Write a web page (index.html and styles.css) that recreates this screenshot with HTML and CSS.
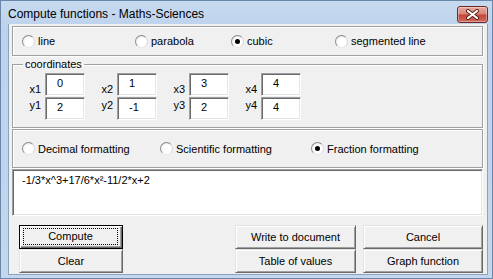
FILE: index.html
```html
<!DOCTYPE html>
<html lang="en">
  <head>
    <meta charset="UTF-8" />
    <title>Compute functions - Maths-Sciences</title>
    <link rel="stylesheet" href="styles.css">
  </head>
  <body>
    <div class="window">
      <div class="titlebar">
        <span class="title">Compute functions - Maths-Sciences</span>
        <button class="close" aria-label="Close">
          <svg width="15" height="11" viewBox="0 0 15 11">
            <path d="M3 2 L12 9 M12 2 L3 9" stroke="#5a1f19" stroke-width="4" stroke-linecap="round" />
            <path d="M3 2 L12 9 M12 2 L3 9" stroke="#ffffff" stroke-width="2.2" stroke-linecap="round" />
          </svg>
        </button>
      </div>

      <div class="client">
        <div class="group curve-type">
          <label class="radio"><span class="dot"></span>line</label>
          <label class="radio"><span class="dot"></span>parabola</label>
          <label class="radio"><span class="dot checked"></span>cubic</label>
          <label class="radio"><span class="dot"></span>segmented line</label>
        </div>

        <fieldset class="coords">
          <legend>coordinates</legend>
          <div class="coord-grid">
            <div class="pair"><span class="lbl lbl-x">x1</span><span class="field">0</span></div>
            <div class="pair"><span class="lbl lbl-x">x2</span><span class="field">1</span></div>
            <div class="pair"><span class="lbl lbl-x">x3</span><span class="field">3</span></div>
            <div class="pair"><span class="lbl lbl-x">x4</span><span class="field">4</span></div>
            <div class="pair"><span class="lbl lbl-y">y1</span><span class="field">2</span></div>
            <div class="pair"><span class="lbl lbl-y">y2</span><span class="field">-1</span></div>
            <div class="pair"><span class="lbl lbl-y">y3</span><span class="field">2</span></div>
            <div class="pair"><span class="lbl lbl-y">y4</span><span class="field">4</span></div>
          </div>
        </fieldset>

        <div class="group formatting">
          <label class="radio"><span class="dot"></span>Decimal formatting</label>
          <label class="radio"><span class="dot"></span>Scientific formatting</label>
          <label class="radio"><span class="dot checked"></span>Fraction formatting</label>
        </div>

        <div class="result">-1/3*x^3+17/6*x²-11/2*x+2</div>

        <div class="buttons">
          <div class="col col-left">
            <button class="btn btn-default"><span class="focus">Compute</span></button>
            <button class="btn">Clear</button>
          </div>
          <div class="col col-mid">
            <button class="btn">Write to document</button>
            <button class="btn">Table of values</button>
          </div>
          <div class="col col-right">
            <button class="btn">Cancel</button>
            <button class="btn">Graph function</button>
          </div>
        </div>
      </div>
    </div>
  </body>
</html>
```

FILE: styles.css
```css
body {
  margin: 0;
  background: #ffffff;
  font-family: 'Liberation Sans', Arial, sans-serif;
  font-size: 11px;
  color: #000000;
}

.window {
  width: 493px;
  height: 279px;
  box-sizing: border-box;
  border: 1px solid #6a86a8;
  background: linear-gradient(#c6d9ef, #bdd3ec 30px, #c3d7ee);
  display: flex;
  flex-direction: column;
  overflow: hidden;
}

.titlebar {
  height: 23px;
  display: flex;
  align-items: center;
  justify-content: space-between;
  padding: 0 4px 0 7px;
  flex-shrink: 0;
}

.title {
  font-size: 12px;
  color: #000000;
  padding-top: 3px;
}

.close {
  width: 31px;
  height: 17px;
  margin-top: 4px;
  padding: 0;
  border: 1px solid #6e2a22;
  border-radius: 3px;
  background: linear-gradient(#e9aa9f, #d88577 45%, #c2473a 55%, #cf6a5c);
  box-shadow: inset 0 0 0 1px rgba(255, 255, 255, 0.35);
  display: flex;
  align-items: center;
  justify-content: center;
}

.client {
  flex: 1;
  margin: 0 4px 3px 7px;
  background: #f0f0f0;
  border: 1px solid #8da3bd;
  border-top: none;
  padding: 2px 4px 0 3px;
}

/* group boxes */
.group,
.coords {
  width: 471px;
  box-sizing: border-box;
  border: 1px solid #a0a0a0;
  box-shadow: inset 1px 1px 0 #ffffff, 1px 1px 0 #ffffff;
}

.group {
  display: grid;
  align-items: center;
  padding-left: 9px;
}

.curve-type {
  height: 30px;
  grid-template-columns: 113px 96px 104px auto;
}

.formatting {
  height: 39px;
  margin-top: 1px;
  grid-template-columns: 138px 151px auto;
}

.radio {
  display: flex;
  align-items: center;
  white-space: nowrap;
}

.dot {
  width: 13px;
  height: 13px;
  box-sizing: border-box;
  border-radius: 50%;
  margin-right: 3px;
  border: 1px solid;
  border-color: #8a8a8a #d8d8d8 #e6e6e6 #8a8a8a;
  background: radial-gradient(circle at 60% 60%, #ffffff 40%, #e4e4e4);
  position: relative;
}

.dot.checked::after {
  content: '';
  position: absolute;
  left: 3px;
  top: 3px;
  width: 5px;
  height: 5px;
  border-radius: 50%;
  background: #000000;
}

/* coordinates */
.coords {
  margin: 2px 0 0;
  padding: 2px 0 7px 10px;
  height: 70px;
}

.coords legend {
  padding: 0 2px;
  line-height: 13px;
}

.coord-grid {
  display: grid;
  grid-template-columns: repeat(4, 72px);
  row-gap: 1px;
  margin-left: 5px;
}

.pair {
  display: flex;
  align-items: center;
}

.lbl {
  width: 13px;
  margin-right: 4px;
  text-align: right;
}

.lbl-x {
  padding-top: 8px;
}

.lbl-y {
  padding-bottom: 8px;
}

.field {
  width: 40px;
  height: 23px;
  box-sizing: border-box;
  background: #ffffff;
  border: 1px solid;
  border-color: #a0a0a0 #ffffff #ffffff #a0a0a0;
  box-shadow: inset 1px 1px 0 #696969, inset -1px -1px 0 #e3e3e3;
  padding: 3px 0 0 11px;
}

/* result box */
.result {
  width: 471px;
  height: 47px;
  box-sizing: border-box;
  margin-top: 1px;
  background: #ffffff;
  border: 1px solid;
  border-color: #a0a0a0 #ffffff #ffffff #a0a0a0;
  box-shadow: inset 1px 1px 0 #696969, inset -1px -1px 0 #e3e3e3;
  padding: 4px 0 0 9px;
}

/* buttons */
.buttons {
  display: flex;
  width: 471px;
  margin-top: 9px;
}

.col {
  display: flex;
  flex-direction: column;
}

.col-left {
  width: 104px;
  margin-left: 7px;
  margin-right: auto;
}

.col-mid {
  width: 121px;
  margin-right: 7px;
}

.col-right {
  width: 120px;
}

.btn {
  height: 24px;
  padding: 0;
  font-family: inherit;
  font-size: 11px;
  color: #000000;
  background: #f0f0f0;
  border: 1px solid;
  border-color: #e3e3e3 #696969 #696969 #e3e3e3;
  box-shadow: inset 1px 1px 0 #ffffff, inset -1px -1px 0 #a0a0a0;
}

.btn-default {
  border-color: #000000;
  box-shadow: inset 1px 1px 0 #ffffff, inset -1px -1px 0 #696969,
    inset -2px -2px 0 #a0a0a0;
  padding: 2px 4px 3px 3px;
}

.focus {
  display: block;
  height: 100%;
  box-sizing: border-box;
  border: 1px dotted #000000;
  line-height: 15px;
}
```
